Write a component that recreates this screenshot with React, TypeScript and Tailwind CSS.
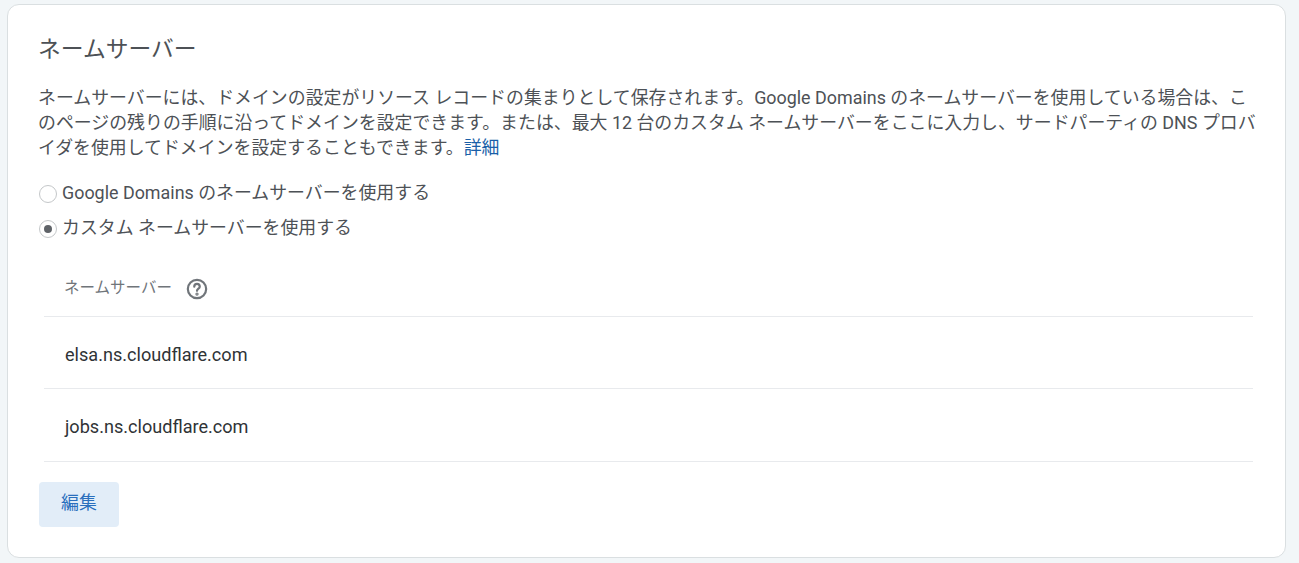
const font = "font-['Roboto','Noto_Sans_CJK_JP',sans-serif]";

function Radio({ checked, label }: { checked?: boolean; label: string }) {
  return (
    <label className="flex h-[35px] items-center">
      <span className="ml-[1px] flex h-[18px] w-[18px] items-center justify-center rounded-full border border-[#c4c7c9] bg-white">
        {checked && <span className="h-[8px] w-[8px] rounded-full bg-[#5f6368]" />}
      </span>
      <span className="ml-[5px] text-[17.9px] text-[#4d5156]">{label}</span>
    </label>
  );
}

function ServerRow({ name, height }: { name: string; height: string }) {
  return (
    <div className={`flex items-center border-b border-[#e8eaed] pl-[21px] pt-[4px] text-[18.1px] text-[#2f3336] ${height}`}>
      {name}
    </div>
  );
}

export default function App() {
  return (
    <div className={`h-[563px] overflow-hidden bg-[#f2f6f8] pl-[7px] pr-[13px] pt-[4px] ${font}`}>
      <div className="h-[554px] rounded-[12px] border border-[#dadfe1] bg-white pl-[30px] pr-[32px] pt-[29px]">
        <h2 className="text-[22.8px] leading-[32px] font-normal text-[#4d5156]">ネームサーバー</h2>
        <p className="mt-[19px] w-[1220px] text-[17.9px] leading-[25px] text-[#4d5156]">
          ネームサーバーには、ドメインの設定がリソース レコードの集まりとして保存されます。Google Domains のネームサーバーを使用している場合は、このページの残りの手順に沿ってドメインを設定できます。または、最大 12 台のカスタム ネームサーバーをここに入力し、サードパーティの DNS プロバイダを使用してドメインを設定することもできます。
          <a className="text-[#1a5fa8]">詳細</a>
        </p>
        <div className="mt-[16px]">
          <Radio label="Google Domains のネームサーバーを使用する" />
          <Radio checked label="カスタム ネームサーバーを使用する" />
        </div>
        <div className="ml-[6px] mt-[16px]">
          <div className="flex h-[55px] items-center border-b border-[#e8eaed] pl-[20px] text-[15.5px] text-[#70757a]">
            ネームサーバー
            <svg className="ml-[14px]" width="22" height="22" viewBox="0 0 24 24" fill="none" stroke="#70757a" strokeWidth="2.4" strokeLinecap="round">
              <circle cx="12" cy="12" r="10" />
              <path d="M9 9.5a3 3 0 0 1 6 0c0 2-3 2.4-3 4.5" />
              <circle cx="12" cy="17.5" r="0.6" fill="#70757a" />
            </svg>
          </div>
          <ServerRow name="elsa.ns.cloudflare.com" height="h-[72px]" />
          <ServerRow name="jobs.ns.cloudflare.com" height="h-[73px]" />
        </div>
        <button className="ml-[1px] mt-[20px] h-[45px] w-[80px] rounded-[4px] bg-[#e2edf8] pb-[2px] text-[17.9px] text-[#2a6fbd]">編集</button>
      </div>
    </div>
  );
}
